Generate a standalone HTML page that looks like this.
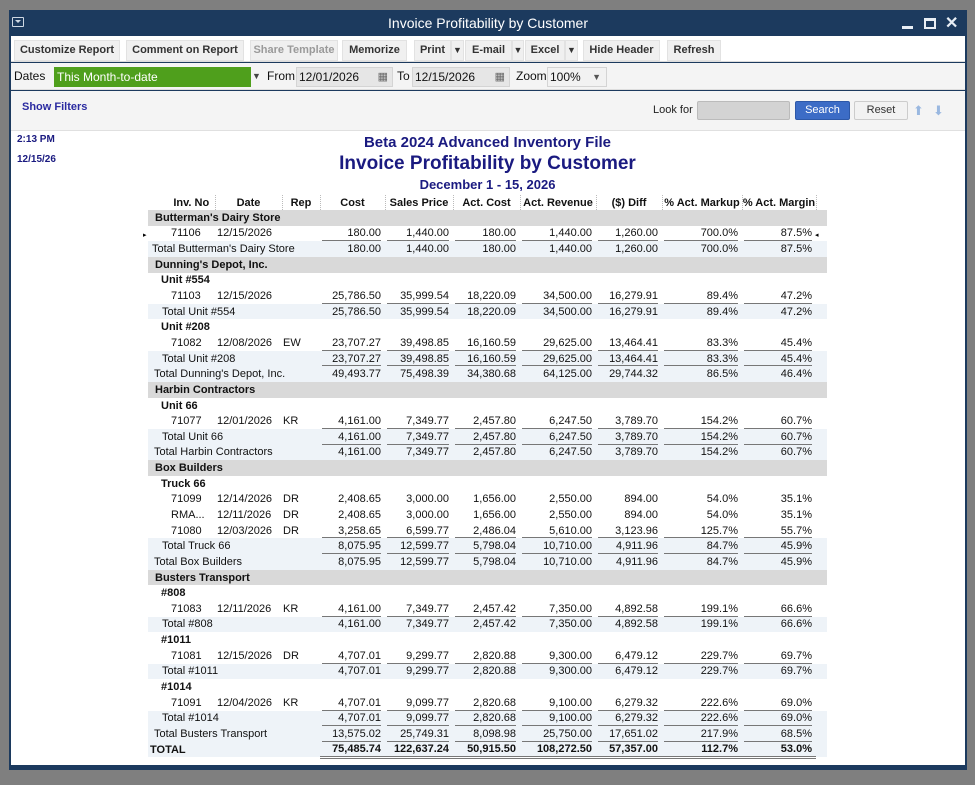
<!DOCTYPE html>
<html><head><meta charset="utf-8"><style>
*{margin:0;padding:0;box-sizing:border-box}
body{width:975px;height:785px;background:#7f7f7f;font-family:"Liberation Sans",Arial,sans-serif;position:relative;overflow:hidden}
.a{position:absolute}
#win{left:9px;top:10px;width:958px;height:760px;background:#1c3a5e}
#title{left:9px;top:10px;width:958px;height:26px;color:#fff;font-size:14px;text-align:center;line-height:27px}
#tb{left:11px;top:36px;width:954px;height:26px;background:#fff;border-bottom:1px solid #ddd}
.btn{position:absolute;top:40px;height:21px;background:#f0f0f0;border:1px solid #e2e2e2;font-size:11px;font-weight:bold;color:#333;text-align:center;line-height:19px}
#db{left:11px;top:63px;width:954px;height:27px;background:#f4f4f4;border-bottom:1px solid #ddd}
.inp{position:absolute;top:67px;height:20px;background:#e6e6e6;border:1px solid #d4d4d4;font-size:12px;line-height:18px;padding-left:2px;color:#111}
.lbl{position:absolute;top:69px;font-size:12px;color:#111}
#fb{left:11px;top:91px;width:954px;height:40px;background:#f4f4f4;border-bottom:1px solid #e0e0e0}
#rep{left:11px;top:131px;width:954px;height:634px;background:#fff}
.hd{position:absolute;color:#1a1a80;font-weight:bold;text-align:center;left:0;width:975px}
table{position:absolute;left:148px;top:195px;border-collapse:collapse;font-size:11px;color:#111;table-layout:fixed;width:679px}
td{height:15.65px;padding:0;white-space:nowrap;line-height:14px;vertical-align:middle}
tr.h td{font-weight:bold;text-align:center;height:15px;border-left:1px dotted #bbb}
tr.h td:first-child{border-left:none}
tr.g td{background:#d9d9d9;font-weight:bold}
tr.s td{font-weight:bold}
tr.t td{background:#eef3f8}
td.n{text-align:right;padding-right:4px}
tr.u td.n{background-image:linear-gradient(#777,#777);background-size:calc(100% - 6px) 1px;background-repeat:no-repeat;background-position:2px 100%}
tr.tot td{font-weight:bold;background:#eef3f8}
tr.tot td.n{border-bottom:3px double #777}
</style></head><body>
<div class="a" id="win"></div>
<div class="a" id="title">Invoice Profitability by Customer</div>
<div class="a" style="left:12px;top:17px;width:12px;height:10px;border:1px solid #cfd8e3;border-radius:1px"><div style="margin:2px auto 0;width:0;height:0;border-left:3px solid transparent;border-right:3px solid transparent;border-top:3px solid #cfd8e3"></div></div>
<div class="a" style="left:902px;top:26px;width:11px;height:3px;background:#e8eef5"></div>
<div class="a" style="left:924px;top:18px;width:12px;height:11px;border:2px solid #e8eef5;border-top-width:3px"></div>
<div class="a" style="left:945px;top:13px;color:#e8eef5;font-size:16px;font-weight:bold">✕</div>
<div class="a" id="tb"></div>
<div class="btn" style="left:14px;width:106px">Customize Report</div>
<div class="btn" style="left:126px;width:118px">Comment on Report</div>
<div class="btn" style="left:250px;width:88px;color:#9a9a9a">Share Template</div>
<div class="btn" style="left:342px;width:65px">Memorize</div>
<div class="btn" style="left:414px;width:37px">Print</div>
<div class="btn" style="left:451px;width:13px;font-size:9px">▼</div>
<div class="btn" style="left:465px;width:47px">E-mail</div>
<div class="btn" style="left:512px;width:12px;font-size:9px">▼</div>
<div class="btn" style="left:525px;width:40px">Excel</div>
<div class="btn" style="left:565px;width:13px;font-size:9px">▼</div>
<div class="btn" style="left:583px;width:77px">Hide Header</div>
<div class="btn" style="left:667px;width:54px">Refresh</div>
<div class="a" id="db"></div>
<div class="lbl" style="left:14px">Dates</div>
<div class="inp" style="left:54px;width:197px;background:#4f9f1c;border-color:#4f9f1c;color:#fff">This Month-to-date</div>
<div class="lbl" style="left:252px;font-size:9px;top:71px;color:#444">▼</div>
<div class="lbl" style="left:267px">From</div>
<div class="inp" style="left:296px;width:97px">12/01/2026<span style="position:absolute;right:4px;top:0;color:#666;font-size:11px">▦</span></div>
<div class="lbl" style="left:397px">To</div>
<div class="inp" style="left:412px;width:98px">12/15/2026<span style="position:absolute;right:4px;top:0;color:#666;font-size:11px">▦</span></div>
<div class="lbl" style="left:516px">Zoom</div>
<div class="inp" style="left:547px;width:60px;background:#f2f2f2">100%<span style="position:absolute;right:5px;top:0;color:#555;font-size:9px">▼</span></div>
<div class="a" id="fb"></div>
<div class="a" style="left:22px;top:101px;font-size:11px;font-weight:bold;color:#2a2aa0">Show Filters</div>
<div class="a" style="left:653px;top:104px;font-size:11px;color:#222">Look for</div>
<div class="a" style="left:697px;top:101px;width:93px;height:19px;background:#d3d3d3;border:1px solid #bbb;border-radius:2px"></div>
<div class="a" style="left:795px;top:101px;width:55px;height:19px;background:#3c6cc6;border:1px solid #2d58a8;border-radius:2px;color:#fff;font-size:11px;text-align:center;line-height:17px">Search</div>
<div class="a" style="left:854px;top:101px;width:54px;height:19px;background:#f2f2f2;border:1px solid #ccc;border-radius:2px;color:#333;font-size:11px;text-align:center;line-height:17px">Reset</div>
<div class="a" style="left:913px;top:103px;color:#9ab8e0;font-size:13px">⬆</div>
<div class="a" style="left:933px;top:103px;color:#9ab8e0;font-size:13px">⬇</div>
<div class="a" id="rep"></div>
<div class="a" style="left:17px;top:134px;font-size:10px;font-weight:bold;color:#1a1a80">2:13 PM</div>
<div class="a" style="left:17px;top:154px;font-size:10px;font-weight:bold;color:#1a1a80">12/15/26</div>
<div class="hd" style="top:134px;font-size:15px">Beta 2024 Advanced Inventory File</div>
<div class="hd" style="top:153px;font-size:19px">Invoice Profitability by Customer</div>
<div class="hd" style="top:177px;font-size:13px">December 1 - 15, 2026</div>
<div class="a" style="left:143px;top:231px;font-size:7px">▸</div>
<div class="a" style="left:815px;top:231px;font-size:7px">◂</div>
<table>
<colgroup><col style="width:67px"><col style="width:67px"><col style="width:38px"><col style="width:65px"><col style="width:68px"><col style="width:67px"><col style="width:76px"><col style="width:66px"><col style="width:80px"><col style="width:74px"><col style="width:11px"></colgroup>
<tr class="h"><td style="padding-left:20px">Inv. No</td><td>Date</td><td>Rep</td><td>Cost</td><td>Sales Price</td><td>Act. Cost</td><td>Act. Revenue</td><td>($) Diff</td><td>% Act. Markup</td><td>% Act. Margin</td><td></td></tr>
<tr class="g"><td colspan="11" style="padding-left:7px">Butterman's Dairy Store</td></tr>
<tr class="u"><td style="padding-left:23px">71106</td><td style="padding-left:2px">12/15/2026</td><td></td><td class="n">180.00</td><td class="n">1,440.00</td><td class="n">180.00</td><td class="n">1,440.00</td><td class="n">1,260.00</td><td class="n">700.0%</td><td class="n">87.5%</td><td></td></tr>
<tr class="t"><td colspan="3" style="padding-left:4px">Total Butterman's Dairy Store</td><td class="n">180.00</td><td class="n">1,440.00</td><td class="n">180.00</td><td class="n">1,440.00</td><td class="n">1,260.00</td><td class="n">700.0%</td><td class="n">87.5%</td><td></td></tr>
<tr class="g"><td colspan="11" style="padding-left:7px">Dunning's Depot, Inc.</td></tr>
<tr class="s"><td colspan="11" style="padding-left:13px">Unit #554</td></tr>
<tr class="u"><td style="padding-left:23px">71103</td><td style="padding-left:2px">12/15/2026</td><td></td><td class="n">25,786.50</td><td class="n">35,999.54</td><td class="n">18,220.09</td><td class="n">34,500.00</td><td class="n">16,279.91</td><td class="n">89.4%</td><td class="n">47.2%</td><td></td></tr>
<tr class="t"><td colspan="3" style="padding-left:14px">Total Unit #554</td><td class="n">25,786.50</td><td class="n">35,999.54</td><td class="n">18,220.09</td><td class="n">34,500.00</td><td class="n">16,279.91</td><td class="n">89.4%</td><td class="n">47.2%</td><td></td></tr>
<tr class="s"><td colspan="11" style="padding-left:13px">Unit #208</td></tr>
<tr class="u"><td style="padding-left:23px">71082</td><td style="padding-left:2px">12/08/2026</td><td style="padding-left:1px">EW</td><td class="n">23,707.27</td><td class="n">39,498.85</td><td class="n">16,160.59</td><td class="n">29,625.00</td><td class="n">13,464.41</td><td class="n">83.3%</td><td class="n">45.4%</td><td></td></tr>
<tr class="t u"><td colspan="3" style="padding-left:14px">Total Unit #208</td><td class="n">23,707.27</td><td class="n">39,498.85</td><td class="n">16,160.59</td><td class="n">29,625.00</td><td class="n">13,464.41</td><td class="n">83.3%</td><td class="n">45.4%</td><td></td></tr>
<tr class="t"><td colspan="3" style="padding-left:6px">Total Dunning's Depot, Inc.</td><td class="n">49,493.77</td><td class="n">75,498.39</td><td class="n">34,380.68</td><td class="n">64,125.00</td><td class="n">29,744.32</td><td class="n">86.5%</td><td class="n">46.4%</td><td></td></tr>
<tr class="g"><td colspan="11" style="padding-left:7px">Harbin Contractors</td></tr>
<tr class="s"><td colspan="11" style="padding-left:13px">Unit 66</td></tr>
<tr class="u"><td style="padding-left:23px">71077</td><td style="padding-left:2px">12/01/2026</td><td style="padding-left:1px">KR</td><td class="n">4,161.00</td><td class="n">7,349.77</td><td class="n">2,457.80</td><td class="n">6,247.50</td><td class="n">3,789.70</td><td class="n">154.2%</td><td class="n">60.7%</td><td></td></tr>
<tr class="t u"><td colspan="3" style="padding-left:14px">Total Unit 66</td><td class="n">4,161.00</td><td class="n">7,349.77</td><td class="n">2,457.80</td><td class="n">6,247.50</td><td class="n">3,789.70</td><td class="n">154.2%</td><td class="n">60.7%</td><td></td></tr>
<tr class="t"><td colspan="3" style="padding-left:6px">Total Harbin Contractors</td><td class="n">4,161.00</td><td class="n">7,349.77</td><td class="n">2,457.80</td><td class="n">6,247.50</td><td class="n">3,789.70</td><td class="n">154.2%</td><td class="n">60.7%</td><td></td></tr>
<tr class="g"><td colspan="11" style="padding-left:7px">Box Builders</td></tr>
<tr class="s"><td colspan="11" style="padding-left:13px">Truck 66</td></tr>
<tr><td style="padding-left:23px">71099</td><td style="padding-left:2px">12/14/2026</td><td style="padding-left:1px">DR</td><td class="n">2,408.65</td><td class="n">3,000.00</td><td class="n">1,656.00</td><td class="n">2,550.00</td><td class="n">894.00</td><td class="n">54.0%</td><td class="n">35.1%</td><td></td></tr>
<tr><td style="padding-left:23px">RMA...</td><td style="padding-left:2px">12/11/2026</td><td style="padding-left:1px">DR</td><td class="n">2,408.65</td><td class="n">3,000.00</td><td class="n">1,656.00</td><td class="n">2,550.00</td><td class="n">894.00</td><td class="n">54.0%</td><td class="n">35.1%</td><td></td></tr>
<tr class="u"><td style="padding-left:23px">71080</td><td style="padding-left:2px">12/03/2026</td><td style="padding-left:1px">DR</td><td class="n">3,258.65</td><td class="n">6,599.77</td><td class="n">2,486.04</td><td class="n">5,610.00</td><td class="n">3,123.96</td><td class="n">125.7%</td><td class="n">55.7%</td><td></td></tr>
<tr class="t u"><td colspan="3" style="padding-left:14px">Total Truck 66</td><td class="n">8,075.95</td><td class="n">12,599.77</td><td class="n">5,798.04</td><td class="n">10,710.00</td><td class="n">4,911.96</td><td class="n">84.7%</td><td class="n">45.9%</td><td></td></tr>
<tr class="t"><td colspan="3" style="padding-left:6px">Total Box Builders</td><td class="n">8,075.95</td><td class="n">12,599.77</td><td class="n">5,798.04</td><td class="n">10,710.00</td><td class="n">4,911.96</td><td class="n">84.7%</td><td class="n">45.9%</td><td></td></tr>
<tr class="g"><td colspan="11" style="padding-left:7px">Busters Transport</td></tr>
<tr class="s"><td colspan="11" style="padding-left:13px">#808</td></tr>
<tr class="u"><td style="padding-left:23px">71083</td><td style="padding-left:2px">12/11/2026</td><td style="padding-left:1px">KR</td><td class="n">4,161.00</td><td class="n">7,349.77</td><td class="n">2,457.42</td><td class="n">7,350.00</td><td class="n">4,892.58</td><td class="n">199.1%</td><td class="n">66.6%</td><td></td></tr>
<tr class="t"><td colspan="3" style="padding-left:14px">Total #808</td><td class="n">4,161.00</td><td class="n">7,349.77</td><td class="n">2,457.42</td><td class="n">7,350.00</td><td class="n">4,892.58</td><td class="n">199.1%</td><td class="n">66.6%</td><td></td></tr>
<tr class="s"><td colspan="11" style="padding-left:13px">#1011</td></tr>
<tr class="u"><td style="padding-left:23px">71081</td><td style="padding-left:2px">12/15/2026</td><td style="padding-left:1px">DR</td><td class="n">4,707.01</td><td class="n">9,299.77</td><td class="n">2,820.88</td><td class="n">9,300.00</td><td class="n">6,479.12</td><td class="n">229.7%</td><td class="n">69.7%</td><td></td></tr>
<tr class="t"><td colspan="3" style="padding-left:14px">Total #1011</td><td class="n">4,707.01</td><td class="n">9,299.77</td><td class="n">2,820.88</td><td class="n">9,300.00</td><td class="n">6,479.12</td><td class="n">229.7%</td><td class="n">69.7%</td><td></td></tr>
<tr class="s"><td colspan="11" style="padding-left:13px">#1014</td></tr>
<tr class="u"><td style="padding-left:23px">71091</td><td style="padding-left:2px">12/04/2026</td><td style="padding-left:1px">KR</td><td class="n">4,707.01</td><td class="n">9,099.77</td><td class="n">2,820.68</td><td class="n">9,100.00</td><td class="n">6,279.32</td><td class="n">222.6%</td><td class="n">69.0%</td><td></td></tr>
<tr class="t u"><td colspan="3" style="padding-left:14px">Total #1014</td><td class="n">4,707.01</td><td class="n">9,099.77</td><td class="n">2,820.68</td><td class="n">9,100.00</td><td class="n">6,279.32</td><td class="n">222.6%</td><td class="n">69.0%</td><td></td></tr>
<tr class="t u"><td colspan="3" style="padding-left:6px">Total Busters Transport</td><td class="n">13,575.02</td><td class="n">25,749.31</td><td class="n">8,098.98</td><td class="n">25,750.00</td><td class="n">17,651.02</td><td class="n">217.9%</td><td class="n">68.5%</td><td></td></tr>
<tr class="tot"><td colspan="3" style="padding-left:2px">TOTAL</td><td class="n">75,485.74</td><td class="n">122,637.24</td><td class="n">50,915.50</td><td class="n">108,272.50</td><td class="n">57,357.00</td><td class="n">112.7%</td><td class="n">53.0%</td><td></td></tr>
</table>
</body></html>
